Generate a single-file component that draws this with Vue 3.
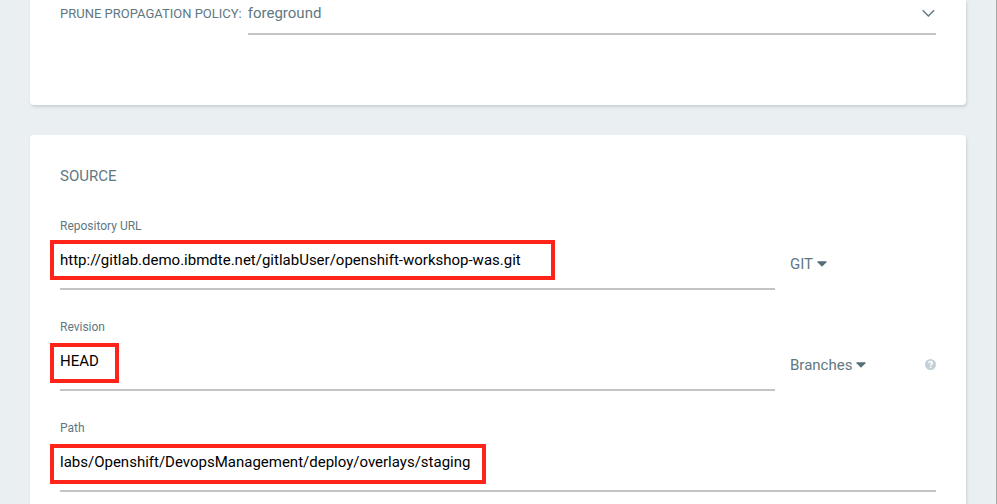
<script setup>
import { ref } from 'vue'

const policy = ref('foreground')
const repoUrl = ref('http://gitlab.demo.ibmdte.net/gitlabUser/openshift-workshop-was.git')
const repoType = ref('GIT')
const revision = ref('HEAD')
const revisionType = ref('Branches')
const path = ref('labs/Openshift/DevopsManagement/deploy/overlays/staging')
</script>

<template>
  <main class="page">
    <section class="card card-top">
      <div class="policy">
        <label class="policy-label" for="policy">PRUNE PROPAGATION POLICY:</label>
        <div class="policy-control">
          <select id="policy" v-model="policy" class="policy-select">
            <option>foreground</option>
            <option>background</option>
            <option>orphan</option>
          </select>
          <svg class="chevron" viewBox="0 0 14 8" aria-hidden="true">
            <path d="M0.7 1.2 L6.4 7 L12.1 1.2" />
          </svg>
        </div>
      </div>
    </section>

    <section class="card card-source">
      <h2 class="title">SOURCE</h2>

      <div class="fields">
        <div class="row">
          <div class="field">
            <label for="repo">Repository URL</label>
            <input id="repo" v-model="repoUrl" type="text" spellcheck="false" />
            <span class="mark mark-repo"></span>
          </div>
          <div class="side">
            <div class="menu">
              <select v-model="repoType" aria-label="Repository type">
                <option>GIT</option>
                <option>HELM</option>
              </select>
              <svg class="caret" viewBox="0 0 10 6" aria-hidden="true">
                <path d="M0.8 0.3 H9.2 Q10 0.6 9.5 1.2 L5.5 5.3 Q5 5.8 4.5 5.3 L0.5 1.2 Q0 0.6 0.8 0.3 Z" />
              </svg>
            </div>
          </div>
        </div>

        <div class="row">
          <div class="field">
            <label for="revision">Revision</label>
            <input id="revision" v-model="revision" type="text" spellcheck="false" />
            <span class="mark mark-revision"></span>
          </div>
          <div class="side">
            <div class="menu">
              <select v-model="revisionType" aria-label="Revision type">
                <option>Branches</option>
                <option>Tags</option>
              </select>
              <svg class="caret" viewBox="0 0 10 6" aria-hidden="true">
                <path d="M0.8 0.3 H9.2 Q10 0.6 9.5 1.2 L5.5 5.3 Q5 5.8 4.5 5.3 L0.5 1.2 Q0 0.6 0.8 0.3 Z" />
              </svg>
            </div>
            <button class="help" type="button" aria-label="Help">
              <svg viewBox="0 0 11 11" aria-hidden="true">
                <circle cx="5.5" cy="5.5" r="5.5" />
                <path d="M3.7 4.2 C3.8 2.9 4.6 2.5 5.5 2.5 C6.6 2.5 7.3 3.1 7.3 4 C7.3 5.2 5.6 5.2 5.6 6.6" />
                <rect x="4.8" y="7.5" width="1.6" height="1.5" />
              </svg>
            </button>
          </div>
        </div>

        <div class="row">
          <div class="field">
            <label for="path">Path</label>
            <input id="path" v-model="path" type="text" spellcheck="false" />
            <span class="mark mark-path"></span>
          </div>
        </div>
      </div>
    </section>
  </main>
</template>

<style>
body {
  background: #eaeff2;
}
</style>

<style scoped>
.page {
  box-sizing: border-box;
  min-height: 100vh;
  display: flex;
  flex-direction: column;
  gap: 30px;
  padding: 0 30px;
  border-right: 1px solid #a9aaa5;
  font-family: Roboto, "Liberation Sans", sans-serif;
  font-size: 15px;
  color: #617882;
}

.card {
  background: #fff;
  box-shadow: 1px 2px 3px rgba(90, 110, 120, 0.22);
}

.card-top {
  padding: 0 30px 70px;
  border-radius: 0 0 4px 4px;
}

.card-source {
  flex: 1;
  padding: 30px 30px 12px;
  border-radius: 4px 4px 0 0;
}

.policy {
  display: flex;
  gap: 6px;
}

.policy-label {
  font-size: 13px;
  line-height: 28px;
}

.policy-control {
  flex: 1;
  display: flex;
  align-items: center;
  padding-bottom: 7px;
  border-bottom: 2px solid #c4c4c4;
}

select,
input,
button {
  appearance: none;
  margin: 0;
  padding: 0;
  border: 0;
  border-radius: 0;
  background: none;
  color: inherit;
  font: inherit;
  outline: none;
}

.policy-select {
  flex: 1;
  height: 26px;
}

.chevron {
  width: 14px;
  height: 8px;
  fill: none;
  stroke: #617882;
  stroke-width: 1.4;
}

.title {
  margin: 0 0 31px;
  font-size: 15px;
  font-weight: 400;
  line-height: 22px;
}

.fields {
  display: flex;
  flex-direction: column;
  gap: 29px;
}

.row {
  display: flex;
  gap: 15px;
}

.field {
  position: relative;
  flex: 1;
  display: flex;
  flex-direction: column;
  gap: 6px;
}

.field label {
  font-size: 12px;
  line-height: 16px;
}

.field input {
  height: 40px;
  padding-bottom: 8px;
  border-bottom: 2px solid #c4c4c4;
  color: #000;
}

.mark {
  position: absolute;
  left: -10px;
  box-sizing: border-box;
  height: 40px;
  border: 4px solid #ff2419;
  pointer-events: none;
}

.mark-repo {
  top: 22px;
  width: 505px;
}

.mark-revision {
  top: 24px;
  width: 69px;
}

.mark-path {
  top: 24px;
  width: 436px;
}

.side {
  width: 146px;
  display: flex;
  align-items: center;
  justify-content: space-between;
  padding-top: 20px;
  box-sizing: border-box;
}

.menu {
  display: flex;
  align-items: center;
  gap: 4px;
}

.menu select {
  field-sizing: content;
}

.caret {
  width: 10px;
  height: 6px;
  fill: #566f79;
}

.help {
  display: flex;
  padding-bottom: 2px;
}

.help svg {
  width: 11px;
  height: 11px;
  fill: #c3d0d6;
}

.help path {
  fill: none;
  stroke: #fff;
  stroke-width: 1.5;
}

.help rect {
  fill: #fff;
}
</style>
